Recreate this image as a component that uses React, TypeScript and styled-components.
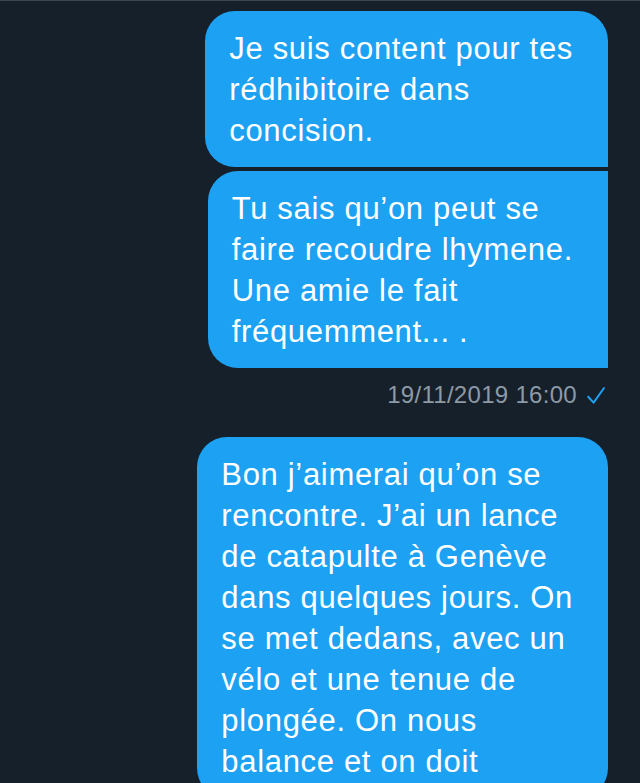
import React from "react";
import styled, { createGlobalStyle } from "styled-components";

const GlobalStyle = createGlobalStyle`
  html, body {
    margin: 0;
    padding: 0;
    background: #16202b;
    overflow: hidden;
  }
`;

const Screen = styled.div`
  box-sizing: border-box;
  height: 783px;
  overflow: hidden;
  border-top: 1px solid #3b4654;
  padding: 10px 32px 0 0;
  display: flex;
  flex-flow: column;
  align-items: flex-end;
  font-family: "Liberation Sans", Arial, sans-serif;
`;

type Corners = "first" | "middle" | "single";

const radii: Record<Corners, string> = {
  first: "30px 30px 0 30px",
  middle: "30px 0 0 30px",
  single: "30px 30px 30px 30px",
};

const Bubble = styled.div<{ $corners: Corners; $gap: number }>`
  margin-top: ${(p) => p.$gap}px;
  padding: 17px 35px 16px 24px;
  background: #1da1f2;
  color: #ffffff;
  font-size: 31px;
  line-height: 41px;
  letter-spacing: 0.68px;
  white-space: pre-line;
  border-radius: ${(p) => radii[p.$corners]};
`;

const Meta = styled.div`
  display: flex;
  align-items: center;
  gap: 10px;
  margin-top: 12px;
  padding-right: 3px;
  font-size: 24px;
  line-height: 30px;
  letter-spacing: 0.3px;
  color: #8d9aa6;
`;

const Check = styled.svg`
  width: 18px;
  height: 18px;
  overflow: visible;
`;

export default function App() {
  return (
    <>
      <GlobalStyle />
      <Screen>
        <Bubble $corners="first" $gap={0}>
          {"Je suis content pour tes\nrédhibitoire dans\nconcision."}
        </Bubble>
        <Bubble $corners="middle" $gap={4}>
          {"Tu sais qu’on peut se\nfaire recoudre lhymene.\nUne amie le fait\nfréquemment... ."}
        </Bubble>
        <Meta>
          <span>19/11/2019 16:00</span>
          <Check viewBox="0 0 18 18">
            <polyline
              points="1.2,10.8 6.6,16.6 17,2"
              fill="none"
              stroke="#1da1f2"
              strokeWidth="2"
              strokeLinecap="round"
              strokeLinejoin="round"
            />
          </Check>
        </Meta>
        <Bubble $corners="single" $gap={27}>
          {"Bon j’aimerai qu’on se\nrencontre. J’ai un lance\nde catapulte à Genève\ndans quelques jours. On\nse met dedans, avec un\nvélo et une tenue de\nplongée. On nous\nbalance et on doit"}
        </Bubble>
      </Screen>
    </>
  );
}
